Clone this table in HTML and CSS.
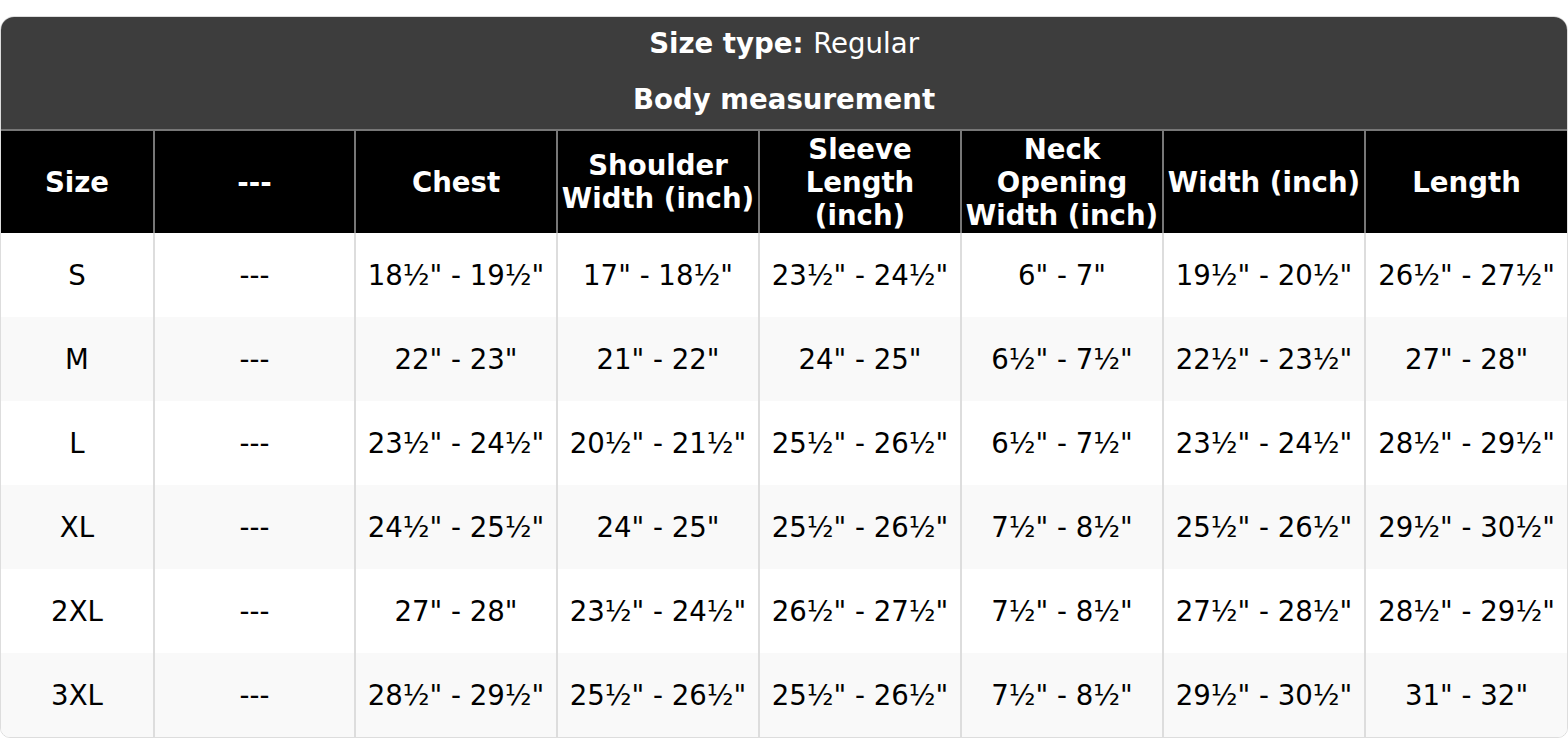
FILE: index.html
```html
<!DOCTYPE html>
<html>
<head>
<meta charset="utf-8">
<link rel="stylesheet" href="styles.css">
</head>
<body>
<div class="page">
  <div class="chart">
    <table class="size-table">
      <colgroup>
        <col class="c-size">
        <col class="c-blank">
        <col class="c-std"><col class="c-std"><col class="c-std">
        <col class="c-std"><col class="c-std"><col class="c-std">
      </colgroup>
      <thead>
        <tr class="cap cap-type"><th colspan="8"><b>Size type:</b> <span class="reg">Regular</span></th></tr>
        <tr class="cap cap-body"><th colspan="8"><b>Body measurement</b></th></tr>
        <tr class="cols">
          <th>Size</th>
          <th>---</th>
          <th>Chest</th>
          <th>Shoulder Width (inch)</th>
          <th>Sleeve Length (inch)</th>
          <th>Neck Opening Width (inch)</th>
          <th>Width (inch)</th>
          <th>Length</th>
        </tr>
      </thead>
      <tbody>
        <tr><td>S</td><td>---</td><td>18½" - 19½"</td><td>17" - 18½"</td><td>23½" - 24½"</td><td>6" - 7"</td><td>19½" - 20½"</td><td>26½" - 27½"</td></tr>
        <tr><td>M</td><td>---</td><td>22" - 23"</td><td>21" - 22"</td><td>24" - 25"</td><td>6½" - 7½"</td><td>22½" - 23½"</td><td>27" - 28"</td></tr>
        <tr><td>L</td><td>---</td><td>23½" - 24½"</td><td>20½" - 21½"</td><td>25½" - 26½"</td><td>6½" - 7½"</td><td>23½" - 24½"</td><td>28½" - 29½"</td></tr>
        <tr><td>XL</td><td>---</td><td>24½" - 25½"</td><td>24" - 25"</td><td>25½" - 26½"</td><td>7½" - 8½"</td><td>25½" - 26½"</td><td>29½" - 30½"</td></tr>
        <tr><td>2XL</td><td>---</td><td>27" - 28"</td><td>23½" - 24½"</td><td>26½" - 27½"</td><td>7½" - 8½"</td><td>27½" - 28½"</td><td>28½" - 29½"</td></tr>
        <tr><td>3XL</td><td>---</td><td>28½" - 29½"</td><td>25½" - 26½"</td><td>25½" - 26½"</td><td>7½" - 8½"</td><td>29½" - 30½"</td><td>31" - 32"</td></tr>
      </tbody>
    </table>
  </div>
</div>
</body>
</html>
```

FILE: styles.css
```css
html, body {
  margin: 0;
  padding: 0;
  background: #ffffff;
}
body {
  font-family: "DejaVu Sans", "Liberation Sans", sans-serif;
  color: #000;
}
.page {
  padding-top: 16px;
}
.chart {
  width: 1568px;
  box-sizing: border-box;
  border: 1px solid #dddddd;
  border-radius: 14px 14px 10px 10px;
  overflow: hidden;
  background: #fff;
}
.size-table {
  width: 100%;
  table-layout: fixed;
  border-collapse: collapse;
  font-size: 27.6px;
}
.c-size { width: 153px; }
.c-blank { width: 201px; }
.c-std { width: 202px; }

.cap th {
  background: #3d3d3d;
  color: #fff;
  padding: 0;
  border: none;
  line-height: 33px;
  text-align: center;
  vertical-align: middle;
}
.cap-type th { height: 52px; }
.cap-body th { height: 60px; }
.cap th b { font-weight: bold; }
.cap .reg { font-weight: normal; }

.cols th {
  background: #000;
  color: #fff;
  font-weight: bold;
  height: 102px;
  padding: 0;
  line-height: 33px;
  border: 2px solid #777777;
  border-bottom: none;
  text-align: center;
  vertical-align: middle;
}
.cols th:first-child { border-left: none; }
.cols th:last-child { border-right: none; }

tbody td {
  height: 84px;
  padding: 0;
  text-align: center;
  vertical-align: middle;
  border: 2px solid #dddddd;
  border-top: none;
  border-bottom: none;
  line-height: 33px;
  white-space: nowrap;
  overflow: hidden;
}
tbody td:first-child { border-left: none; }
tbody td:last-child { border-right: none; }
tbody tr:nth-child(even) td { background: #f9f9f9; }
tbody tr:nth-child(odd) td { background: #ffffff; }
```
